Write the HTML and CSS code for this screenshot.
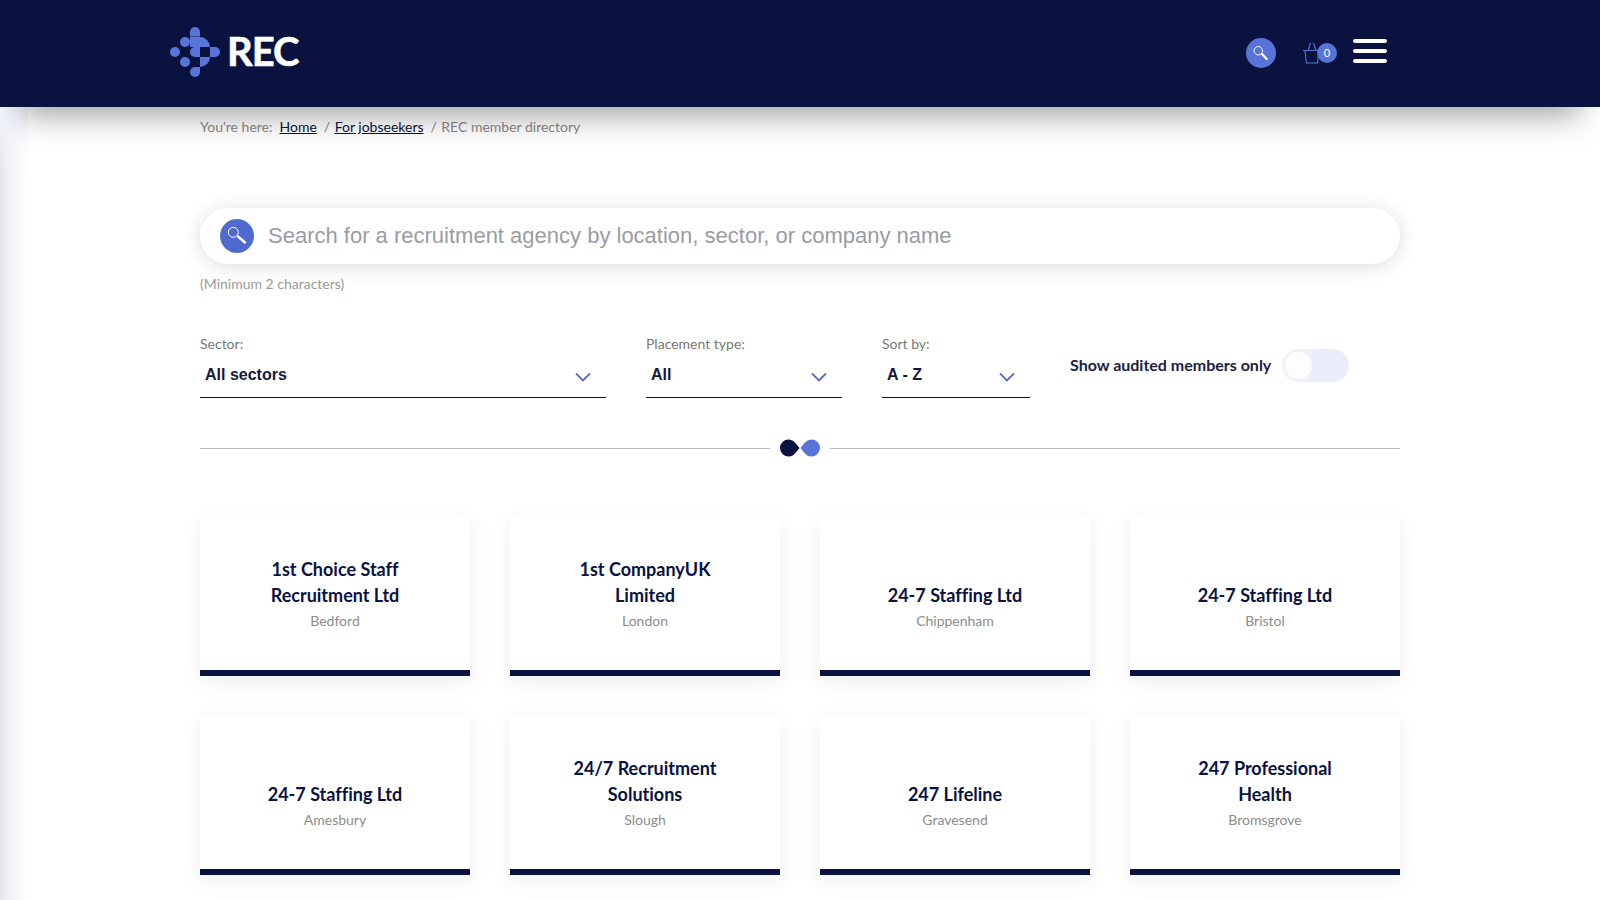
FILE: index.html
```html
<!DOCTYPE html>
<html lang="en">
<head>
<meta charset="utf-8">
<title>REC member directory</title>
<link rel="stylesheet" href="styles.css">
</head>
<body>
<header class="site-header">
  <div class="header-inner">
    <a class="logo">
      <svg class="logo-mark" viewBox="0 0 50 50" width="50" height="50">
        <g fill="#5874d8">
          <path d="M20 5a5 5 0 0 1 10 0v4.500h-10z"/>
          <circle cx="15" cy="15" r="5"/>
          <circle cx="5" cy="25" r="5"/>
          <circle cx="15" cy="35" r="5"/>
          <path d="M20 10h10a10 10 0 0 1 10 10h-20z"/>
          <path d="M20 25a5 5 0 0 1 5-5h5v10h-5a5 5 0 0 1-5-5z"/>
          <path d="M40 20h5a5 5 0 0 1 0 10h-5z"/>
          <path d="M30 30h10a10 10 0 0 1-10 10z"/>
          <path d="M30 40v5a5 5 0 0 1-10 0 5 5 0 0 1 5-5z"/>
        </g>
      </svg>
      <span class="logo-text">REC</span>
    </a>
    <div class="header-tools">
      <span class="search-btn">
        <svg viewBox="0 0 30 30" width="30" height="30"><circle cx="12.300" cy="12.700" r="4.200" fill="none" stroke="#fff" stroke-width="1"/><path d="M16 16l4.700 5" stroke="#fff" stroke-width="2.200" stroke-linecap="round"/></svg>
      </span>
      <span class="basket">
        <svg viewBox="0 0 24 24" width="24" height="24"><path d="M0 8.500h17M2 9l1.500 12h11l1.500-12M5 8.500l2.500-7.500M13 8.500l-2.500-7.500" fill="none" stroke="#5874d8" stroke-width="1.100"/></svg>
        <span class="basket-count">0</span>
      </span>
      <span class="burger"><i></i><i></i><i></i></span>
    </div>
  </div>
</header>

<div class="edge"></div>

<main class="content">
  <nav class="crumbs">
    <span>You're here:</span>
    <a class="first">Home</a>
    <span class="sep">/</span>
    <a>For jobseekers</a>
    <span class="sep">/</span>
    <span>REC member directory</span>
  </nav>

  <div class="search-bar">
    <span class="search-icon">
      <svg viewBox="0 0 34 34" width="34" height="34"><circle cx="13.300" cy="13.300" r="5" fill="none" stroke="#fff" stroke-width="1"/><path d="M18 17.500l7 6" stroke="#fff" stroke-width="2.400" stroke-linecap="round"/></svg>
    </span>
    <span class="search-placeholder">Search for a recruitment agency by location, sector, or company name</span>
  </div>
  <p class="hint">(Minimum 2 characters)</p>

  <div class="filters">
    <div class="filter f-sector">
      <label>Sector:</label>
      <div class="select"><span>All sectors</span><svg viewBox="0 0 16 10" width="16" height="10"><path d="M1 1.500l7 7 7-7" fill="none" stroke="#5a6cc0" stroke-width="1.800"/></svg></div>
    </div>
    <div class="filter f-place">
      <label>Placement type:</label>
      <div class="select"><span>All</span><svg viewBox="0 0 16 10" width="16" height="10"><path d="M1 1.500l7 7 7-7" fill="none" stroke="#5a6cc0" stroke-width="1.800"/></svg></div>
    </div>
    <div class="filter f-sort">
      <label>Sort by:</label>
      <div class="select"><span>A - Z</span><svg viewBox="0 0 16 10" width="16" height="10"><path d="M1 1.500l7 7 7-7" fill="none" stroke="#5a6cc0" stroke-width="1.800"/></svg></div>
    </div>
    <div class="audited">
      <span class="audited-label">Show audited members only</span>
      <span class="toggle"><i></i></span>
    </div>
  </div>

  <div class="divider">
    <span class="rule"></span>
    <svg viewBox="0 0 42 20" width="42" height="20">
      <path d="M20.500 10L16.070 4.610A8.500 8.500 0 1 0 16.070 15.390z" fill="#0a1240"/>
      <path d="M21.500 10L25.930 4.610A8.500 8.500 0 1 1 25.930 15.390z" fill="#5874d8"/>
    </svg>
    <span class="rule"></span>
  </div>

  <section class="cards">
    <article class="card"><h3>1st Choice Staff<br>Recruitment Ltd</h3><p>Bedford</p></article>
    <article class="card"><h3>1st CompanyUK<br>Limited</h3><p>London</p></article>
    <article class="card"><h3>24-7 Staffing Ltd</h3><p>Chippenham</p></article>
    <article class="card"><h3>24-7 Staffing Ltd</h3><p>Bristol</p></article>
    <article class="card"><h3>24-7 Staffing Ltd</h3><p>Amesbury</p></article>
    <article class="card"><h3>24/7 Recruitment<br>Solutions</h3><p>Slough</p></article>
    <article class="card"><h3>247 Lifeline</h3><p>Gravesend</p></article>
    <article class="card"><h3>247 Professional<br>Health</h3><p>Bromsgrove</p></article>
  </section>
</main>
</body>
</html>
```
FILE: styles.css
```css
* { box-sizing: border-box; }
html, body { margin: 0; height: 900px; overflow: hidden; }
body { background: #fff; font-family: Lato, "Liberation Sans", sans-serif; font-variant-ligatures: none; color: #0a1240; position: relative; }

.site-header { height: 107px; background: #0a1240; position: relative; z-index: 2; box-shadow: 0 28px 32px -20px rgba(0,0,0,.38); }
.header-inner { width: 1240px; margin: 0 auto; height: 107px; display: flex; align-items: center; justify-content: space-between; padding: 0 0 4px; }
.logo { display: flex; align-items: center; gap: 7px; margin-left: -10px; color: #fff; }
.logo-mark { display: block; }
.logo-text { font-size: 40px; font-weight: 700; letter-spacing: -1px; line-height: 50px; padding-bottom: 2px; -webkit-text-stroke: .6px #fff; }
.header-tools { display: flex; align-items: center; margin-right: 33px; }
.search-btn { width: 30px; height: 30px; border-radius: 50%; background: #5874d8; display: block; margin-top: 3px; }
.search-btn svg { display: block; }
.basket { position: relative; width: 34px; height: 24px; margin-left: 27px; margin-top: 5px; }
.basket svg { display: block; }
.basket-count { position: absolute; left: 14px; top: 1px; width: 20px; height: 20px; border-radius: 50%; background: #5874d8; color: #fff; font-size: 11px; line-height: 20px; text-align: center; }
.burger { display: flex; flex-direction: column; gap: 6px; width: 34px; margin-left: 16px; margin-bottom: 2px; }
.burger i { display: block; height: 4px; border-radius: 2px; background: #fff; }

.edge { position: absolute; left: 0; top: 107px; bottom: 0; width: 28px; background: linear-gradient(180deg, #f5f7ff 0, rgba(245,247,255,0) 70px), linear-gradient(90deg, #e3e4ea 0, #f2f2f5 10px, #fff 27px); }

.content { width: 1200px; margin: 0 auto; position: relative; }
.crumbs { display: flex; gap: 6px; font-size: 14px; line-height: 20px; color: #888; padding-top: 10px; height: 30px; }
.crumbs a { color: #0a1240; text-decoration: underline; }
.crumbs .first { margin-left: 1px; }
.crumbs .sep { margin-left: 1px; margin-right: -1.500px; }

.search-bar { margin-top: 71px; height: 56px; border-radius: 28px; background: #fff; box-shadow: 0 2px 20px rgba(0,0,0,.14); display: flex; align-items: center; padding-left: 20px; gap: 14px; }
.search-icon { width: 34px; height: 34px; border-radius: 50%; background: #4f6bd0; display: block; }
.search-icon svg { display: block; }
.search-placeholder { font-family: "Liberation Sans", Arial, sans-serif; font-size: 22px; color: #9a9ca3; }
.hint { margin: 11px 0 0; font-size: 14px; line-height: 18px; color: #9a9a9a; }

.filters { display: flex; margin-top: 42px; gap: 40px; align-items: stretch; }
.filter label { display: block; font-size: 14px; line-height: 18px; color: #777; }
.select { margin-top: 4px; height: 41px; border-bottom: 1px solid #0d1020; display: flex; align-items: center; justify-content: space-between; padding: 0 15px 4px 5px; font-family: "Liberation Sans", Arial, sans-serif; font-size: 16px; font-weight: 700; color: #14193a; }
.select svg { margin-top: 3px; }
.f-sector { width: 406px; }
.f-place { width: 196px; }
.f-sort { width: 148px; }
.audited { display: flex; align-items: center; gap: 11px; font-size: 16px; font-weight: 700; color: #1b2140; height: 60px; }
.audited-label { padding-bottom: 2px; }
.toggle { width: 67px; height: 33px; border-radius: 17px; background: linear-gradient(90deg, #f2f3fa, #e9edfa 60%); position: relative; display: block; }
.toggle i { position: absolute; left: 3px; top: 3px; width: 27px; height: 27px; border-radius: 50%; background: #fdfdfe; }

.divider { display: flex; align-items: center; gap: 9px; margin-top: 40px; height: 20px; }
.divider .rule { flex: 1; height: 1px; background: #bbb; }
.divider svg { display: block; }

.cards { margin-top: 59px; display: grid; grid-template-columns: repeat(4, 270px); gap: 40px; }
.card { height: 159px; background: #fff; border-bottom: 6px solid #0a1240; box-shadow: 0 6px 20px rgba(0,0,0,.07); display: flex; flex-direction: column; align-items: center; justify-content: flex-end; text-align: center; padding-bottom: 40px; }
.card h3 { margin: 0; font-size: 18px; line-height: 25.400px; font-weight: 700; color: #0a1240; }
.card p { margin: 4px 0 0; font-size: 14px; line-height: 18px; color: #8c8c8c; }
```
